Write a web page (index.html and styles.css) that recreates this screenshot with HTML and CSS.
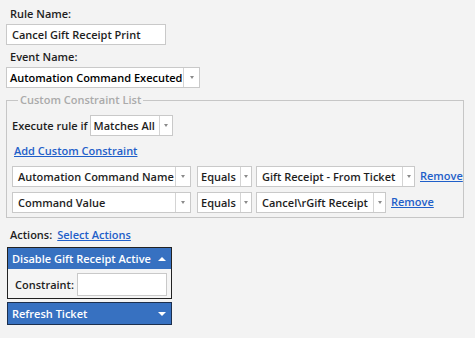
FILE: index.html
```html
<!DOCTYPE html>
<html>
<head>
	<meta charset="utf-8">
	<link rel="stylesheet" href="styles.css">
</head>
<body>
	<div class="rule-editor">
		<div class="label">Rule Name:</div>
		<div class="textbox rule-name">Cancel Gift Receipt Print</div>

		<div class="label">Event Name:</div>
		<div class="combo event-combo">
			<span class="combo-text">Automation Command Executed</span>
			<span class="combo-btn"><i class="caret"></i></span>
		</div>

		<fieldset class="constraints">
			<legend>Custom Constraint List</legend>
			<div class="execute-row">
				<span class="inline-label">Execute rule if</span>
				<div class="combo match-combo">
					<span class="combo-text">Matches All</span>
					<span class="combo-btn"><i class="caret"></i></span>
				</div>
			</div>
			<a class="link add-link" href="#">Add Custom Constraint</a>

			<div class="constraint-row">
				<div class="combo name-combo">
					<span class="combo-text">Automation Command Name</span>
					<span class="combo-btn"><i class="caret"></i></span>
				</div>
				<div class="combo op-combo">
					<span class="combo-text">Equals</span>
					<span class="combo-btn"><i class="caret"></i></span>
				</div>
				<div class="combo value-combo">
					<span class="combo-text">Gift Receipt - From Ticket</span>
					<span class="combo-btn"><i class="caret"></i></span>
				</div>
				<a class="link" href="#">Remove</a>
			</div>
			<div class="constraint-row">
				<div class="combo name-combo">
					<span class="combo-text">Command Value</span>
					<span class="combo-btn"><i class="caret"></i></span>
				</div>
				<div class="combo op-combo">
					<span class="combo-text">Equals</span>
					<span class="combo-btn"><i class="caret"></i></span>
				</div>
				<div class="combo value-combo short">
					<span class="combo-text">Cancel\rGift Receipt</span>
					<span class="combo-btn"><i class="caret"></i></span>
				</div>
				<a class="link" href="#">Remove</a>
			</div>
		</fieldset>

		<div class="actions-row">
			<span class="inline-label">Actions:</span>
			<a class="link" href="#">Select Actions</a>
		</div>

		<div class="action-panel open">
			<div class="action-head">
				<span>Disable Gift Receipt Active</span>
				<i class="arrow up"></i>
			</div>
			<div class="action-body">
				<span class="inline-label">Constraint:</span>
				<div class="textbox constraint-box"></div>
			</div>
		</div>
		<div class="action-panel">
			<div class="action-head">
				<span>Refresh Ticket</span>
				<i class="arrow down"></i>
			</div>
		</div>
	</div>
</body>
</html>
```

FILE: styles.css
```css
html, body {
	margin: 0;
	padding: 0;
	background-color: #f3f3f3;
	font-family: "Open Sans", "Noto Sans", Arial, sans-serif;
	font-size: 11px;
	font-weight: 600;
	color: #1e1e1e;
}

.rule-editor {
	display: flex;
	flex-direction: column;
	align-items: flex-start;
	padding: 6px 13px 0 6px;
}

.label {
	padding-left: 4px;
	line-height: 15px;
	margin-bottom: 3px;
}

.textbox {
	background: #fff;
	border: 1px solid #c9c9c9;
	box-sizing: border-box;
	height: 21px;
	line-height: 19px;
	padding: 0 5px;
}

.rule-name {
	width: 160px;
	margin-bottom: 4px;
}

.combo {
	display: flex;
	flex-shrink: 0;
	background: #fff;
	border: 1px solid #c9c9c9;
	box-sizing: border-box;
	height: 21px;
	line-height: 19px;
}
.combo-text {
	flex: 1;
	padding: 0 5px;
	white-space: nowrap;
	overflow: hidden;
}
.combo-btn {
	width: 14px;
	border-left: 1px solid #d4d4d4;
	display: flex;
	align-items: center;
	justify-content: center;
}
.caret {
	width: 0;
	height: 0;
	border-left: 2px solid transparent;
	border-right: 2px solid transparent;
	border-top: 3px solid #8a8a8a;
}

.event-combo {
	width: 194px;
	margin-bottom: 6px;
}
.event-combo .combo-text {
	color: #000;
	padding-left: 3px;
}
.event-combo .combo-btn {
	width: 15px;
}

.constraints {
	align-self: stretch;
	margin: 0;
	padding: 3px 0 4px 5px;
	border: 1px solid #c6c6c6;
	border-radius: 0;
}
.constraints legend {
	color: #aaaaaa;
	padding: 0 2px;
	margin-left: 6px;
	line-height: 12px;
}

.execute-row {
	display: flex;
	align-items: center;
	gap: 2px;
	margin-top: 6px;
}
.inline-label {
	white-space: nowrap;
}
.match-combo {
	width: 83px;
}
.match-combo .combo-text {
	padding-left: 3px;
}
.match-combo .combo-btn {
	width: 12px;
}

.link {
	color: #1f5fc9;
	text-decoration: underline;
}
.add-link {
	display: inline-block;
	margin: 7px 0 8px 2px;
	line-height: 15px;
}

.constraint-row {
	display: flex;
	align-items: center;
	gap: 5px;
	margin-bottom: 5px;
}
.constraint-row:last-child {
	margin-bottom: 0;
}
.name-combo {
	width: 179px;
}
.op-combo {
	width: 55px;
	margin-left: 1px;
	margin-right: -1px;
}
.op-combo .combo-text {
	padding: 0 0 0 3px;
}
.op-combo .combo-btn {
	width: 10px;
}
.value-combo {
	width: 159px;
}
.value-combo .combo-btn {
	width: 11px;
}
.value-combo.short {
	width: 130px;
}
.constraint-row .link {
	margin-top: -3px;
	white-space: nowrap;
}

.actions-row {
	display: flex;
	gap: 5px;
	margin: 9px 0 5px 4px;
	line-height: 15px;
}

.action-panel {
	width: 165px;
	border: 1px solid #1c2f4d;
	box-sizing: border-box;
	margin: 0 0 3px 1px;
}
.action-head {
	display: flex;
	align-items: center;
	justify-content: space-between;
	background: #3771c1;
	color: #fff;
	height: 21px;
	padding: 0 5px 0 4px;
}
.arrow {
	width: 0;
	height: 0;
	border-left: 4px solid transparent;
	border-right: 4px solid transparent;
}
.arrow.up {
	border-bottom: 4px solid #fff;
}
.arrow.down {
	border-top: 4px solid #fff;
}
.open {
	border-color: #222;
}
.action-body {
	display: flex;
	align-items: center;
	gap: 3px;
	background: #f5f5f5;
	padding: 4px 3px 2px 7px;
}
.constraint-box {
	width: 90px;
	height: 23px;
}
```
